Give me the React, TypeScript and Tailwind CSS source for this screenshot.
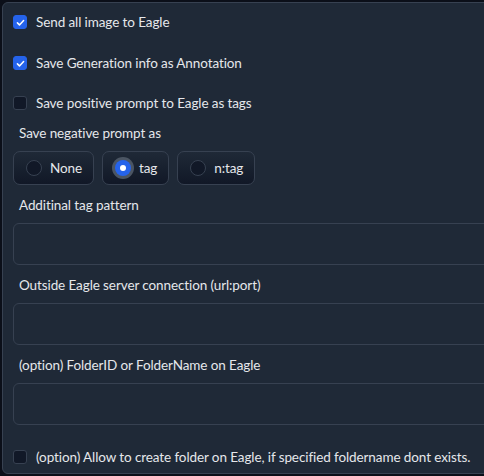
import React, { FC, useState } from "react";

const font = { fontFamily: "Lato, 'Noto Sans', sans-serif" };

interface CheckRowProps {
  label: string;
  checked: boolean;
  onToggle: () => void;
  className?: string;
}

const CheckRow: FC<CheckRowProps> = ({ label, checked, onToggle, className }) => (
  <label className={`flex h-[20px] items-center gap-[9px] cursor-pointer ${className ?? ""}`}>
    <span
      onClick={onToggle}
      className={`flex h-[14px] w-[14px] shrink-0 items-center justify-center rounded-[3px] border ${
        checked ? "border-[#2563eb] bg-[#2563eb]" : "border-[#374151] bg-[#111827]"
      }`}
    >
      {checked && (
        <svg viewBox="0 0 16 16" className="h-[11px] w-[11px]" fill="none">
          <path d="M3.5 8.5l3 3 6-6.5" stroke="white" strokeWidth="2.2" strokeLinecap="round" strokeLinejoin="round" />
        </svg>
      )}
    </span>
    <span className="whitespace-nowrap text-[13.5px] leading-[20px] tracking-[-0.1px] text-[#e5e7eb]">{label}</span>
  </label>
);

const TextField: FC<{ label: string }> = ({ label }) => (
  <div className="flex flex-col">
    <span className="ml-[6px] text-[13.5px] leading-[20px] tracking-[-0.1px] text-[#e5e7eb]">{label}</span>
    <input
      type="text"
      className="mt-[8px] h-[42px] w-[520px] rounded-[6px] border border-[#374151] bg-[#1f2937] px-3 text-[14px] text-[#e5e7eb] outline-none"
    />
  </div>
);

const options = ["None", "tag", "n:tag"];

const App: FC = () => {
  const [sendAll, setSendAll] = useState(true);
  const [saveInfo, setSaveInfo] = useState(true);
  const [savePositive, setSavePositive] = useState(false);
  const [allowCreate, setAllowCreate] = useState(false);
  const [negative, setNegative] = useState("tag");

  return (
    <div className="h-[476px] w-[484px] overflow-hidden bg-[#0b0f19]" style={font}>
      <div className="ml-[2px] mt-[2px] flex h-[472px] w-[520px] flex-col rounded-[6px] border border-[#374151] bg-[#1f2937] pl-[10px] pt-[9px]">
        <CheckRow label="Send all image to Eagle" checked={sendAll} onToggle={() => setSendAll(!sendAll)} />
        <CheckRow
          label="Save Generation info as Annotation"
          checked={saveInfo}
          onToggle={() => setSaveInfo(!saveInfo)}
          className="mt-[21px]"
        />
        <CheckRow
          label="Save positive prompt to Eagle as tags"
          checked={savePositive}
          onToggle={() => setSavePositive(!savePositive)}
          className="mt-[20px]"
        />

        <span className="ml-[6px] mt-[10px] text-[13.5px] leading-[20px] tracking-[-0.1px] text-[#e5e7eb]">
          Save negative prompt as
        </span>
        <div className="mt-[8px] flex gap-[8px]">
          {options.map((opt) => {
            const selected = negative === opt;
            return (
              <button
                key={opt}
                onClick={() => setNegative(opt)}
                className="flex h-[34px] items-center gap-[8px] rounded-[7px] border border-[#374151] bg-gradient-to-b from-[#1f2937] to-[#111827] pl-[12px] pr-[11px] text-[13.5px] tracking-[-0.1px] text-[#e5e7eb]"
              >
                {selected ? (
                  <span className="flex h-[16px] w-[16px] items-center justify-center rounded-full bg-[#2563eb] ring-[3px] ring-[#4b5563]">
                    <span className="h-[6px] w-[6px] rounded-full bg-white" />
                  </span>
                ) : (
                  <span className="h-[16px] w-[16px] rounded-full border border-[#374151] bg-[#111827]" />
                )}
                {opt}
              </button>
            );
          })}
        </div>

        <div className="mt-[10px] flex flex-col gap-[10px]">
          <TextField label="Additinal tag pattern" />
          <TextField label="Outside Eagle server connection (url:port)" />
          <TextField label="(option) FolderID or FolderName on Eagle" />
        </div>

        <CheckRow
          label="(option) Allow to create folder on Eagle, if specified foldername dont exists."
          checked={allowCreate}
          onToggle={() => setAllowCreate(!allowCreate)}
          className="mt-[22px]"
        />
      </div>
    </div>
  );
};

export default App;
